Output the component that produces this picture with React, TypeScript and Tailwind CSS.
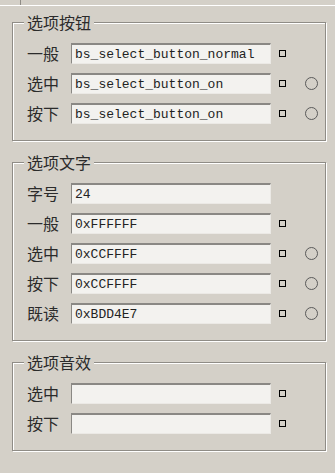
import React from "react";

type Row = {
  label: string;
  value: string;
  square?: boolean;
  circle?: boolean;
};

const buttonRows: Row[] = [
  { label: "一般", value: "bs_select_button_normal", square: true },
  { label: "选中", value: "bs_select_button_on", square: true, circle: true },
  { label: "按下", value: "bs_select_button_on", square: true, circle: true },
];

const textRows: Row[] = [
  { label: "字号", value: "24" },
  { label: "一般", value: "0xFFFFFF", square: true },
  { label: "选中", value: "0xCCFFFF", square: true, circle: true },
  { label: "按下", value: "0xCCFFFF", square: true, circle: true },
  { label: "既读", value: "0xBDD4E7", square: true, circle: true },
];

const soundRows: Row[] = [
  { label: "选中", value: "", square: true },
  { label: "按下", value: "", square: true },
];

const cjk = "font-['Noto_Sans_CJK_SC','Noto_Sans',sans-serif]";

function FieldRow({ row }: { row: Row }) {
  return (
    <div className="flex items-center h-[21px]">
      <span className={`w-[44px] text-[16px] leading-[21px] text-[#2b2b2b] ${cjk}`}>
        {row.label}
      </span>
      <div className="w-[200px] h-[21px] bg-[#f3f2ef] border-t-2 border-l border-t-[#8a8884] border-l-[#8a8884] border-b border-r border-b-[#ebe9e5] border-r-[#ebe9e5] pl-[3px] flex items-center">
        <span className="font-['Liberation_Mono',monospace] text-[13px] leading-none text-[#222] whitespace-nowrap">
          {row.value}
        </span>
      </div>
      {row.square && (
        <div className="ml-[8px] w-[7px] h-[7px] border-[1.5px] border-black" />
      )}
      {row.circle && (
        <div className="ml-[19px] w-[13px] h-[13px] rounded-full border border-[#5a5a5a]" />
      )}
    </div>
  );
}

function Group({ title, rows, className }: { title: string; rows: Row[]; className?: string }) {
  return (
    <fieldset
      className={`ml-[12px] w-[314px] border border-[#8f8c86] shadow-[inset_1px_1px_0_#fff,1px_1px_0_#fff] pl-[14px] pt-[13px] pb-[16px] ${className ?? ""}`}
    >
      <legend className={`-ml-[3px] px-[3px] bg-[#d4d0c8] text-[16px] leading-[16px] text-[#2b2b2b] ${cjk}`}>
        {title}
      </legend>
      <div className="flex flex-col gap-[9px]">
        {rows.map((r, i) => (
          <FieldRow key={i} row={r} />
        ))}
      </div>
    </fieldset>
  );
}

export default function App() {
  return (
    <div className="w-[335px] h-[473px] bg-[#d4d0c8] overflow-hidden">
      {/* tab strip remnant */}
      <div className="h-[6px] border-b border-white flex">
        <div className="w-[21px] h-full border-r border-[#8f8c86]" />
      </div>

      <Group title="选项按钮" rows={buttonRows} className="mt-[8px]" />
      <Group title="选项文字" rows={textRows} className="mt-[13px]" />
      <Group title="选项音效" rows={soundRows} className="mt-[13px]" />
    </div>
  );
}
